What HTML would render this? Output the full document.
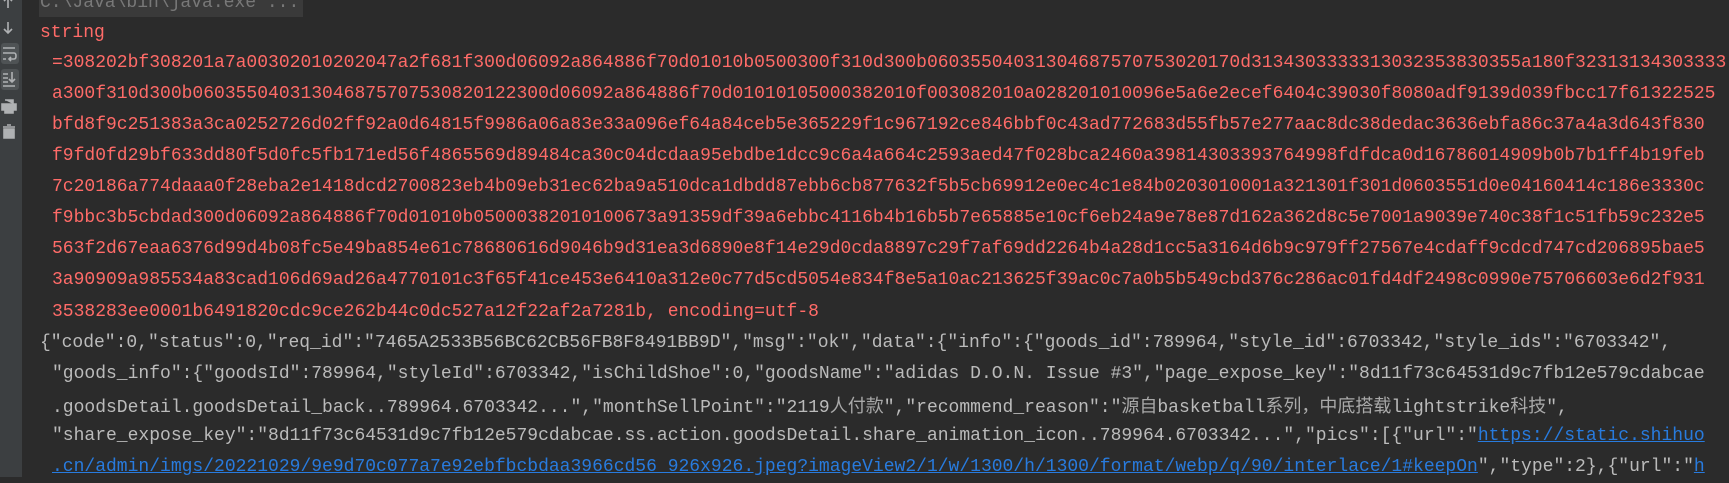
<!DOCTYPE html>
<html><head><meta charset="utf-8">
<style>
html,body{margin:0;padding:0;}
body{width:1729px;height:477px;overflow:hidden;background:#2b2b2b;position:relative;font-family:"Liberation Mono","Noto Sans CJK SC",monospace;font-size:18px;}
.gut{position:absolute;left:0;top:0;width:22px;height:477px;background:#3c3f41;}
.hl{position:absolute;left:1px;width:18px;height:21px;background:#4f5355;border-radius:3px;}
.ln{position:absolute;white-space:pre;line-height:31px;height:31px;}
.r{color:#ff6b68;left:52px;}
.g{color:#bbbbbb;left:52px;}
.java{position:absolute;left:39px;top:0;width:264px;height:17px;background:#3a3a3a;}
a{color:#287bde;text-decoration:underline;}
.cjk{font-family:"Noto Sans CJK SC",sans-serif;color:#a9a9a9;}
</style></head><body>
<div class="gut">
<div class="hl" style="top:43px"></div>
<div class="hl" style="top:69px"></div>
<svg width="22" height="150" style="position:absolute;left:0;top:0" fill="none" stroke="#afb1b3" stroke-width="1.6">
<path d="M8 -2V8M4 1L8 -3L12 1"/>
<path d="M8 22V33M4 29L8 33L12 29"/>
<path d="M3 48H15M3 53H14Q16 53 16 56Q16 59 14 59H9M11 57L9 59L11 61M3 59H6"/>
<path d="M3 74H8M3 78H8M3 82H8M3 86H15M12 72V82M9 79L12 82L15 79"/>
<path d="M5 100H13V104M2 104H16V110H2Z M5 109H13V113H5Z" fill="#afb1b3"/>
<path d="M3 127H15M7 125H11M4 129H14V138H4Z" fill="#afb1b3"/>
</svg>
</div>
<div class="java"></div>
<div class="ln" style="left:40px;top:-12px;color:#787878">C:\Java\bin\java.exe ...</div>
<div class="ln" style="left:40px;top:18px;color:#ff6b68">string</div>
<div class="ln r" style="top:48px">=308202bf308201a7a00302010202047a2f681f300d06092a864886f70d01010b0500300f310d300b06035504031304687570753020170d3134303333313032353830355a180f32313134303333</div>
<div class="ln r" style="top:79px">a300f310d300b060355040313046875707530820122300d06092a864886f70d01010105000382010f003082010a028201010096e5a6e2ecef6404c39030f8080adf9139d039fbcc17f61322525</div>
<div class="ln r" style="top:110px">bfd8f9c251383a3ca0252726d02ff92a0d64815f9986a06a83e33a096ef64a84ceb5e365229f1c967192ce846bbf0c43ad772683d55fb57e277aac8dc38dedac3636ebfa86c37a4a3d643f830</div>
<div class="ln r" style="top:141px">f9fd0fd29bf633dd80f5d0fc5fb171ed56f4865569d89484ca30c04dcdaa95ebdbe1dcc9c6a4a664c2593aed47f028bca2460a39814303393764998fdfdca0d16786014909b0b7b1ff4b19feb</div>
<div class="ln r" style="top:172px">7c20186a774daaa0f28eba2e1418dcd2700823eb4b09eb31ec62ba9a510dca1dbdd87ebb6cb877632f5b5cb69912e0ec4c1e84b0203010001a321301f301d0603551d0e04160414c186e3330c</div>
<div class="ln r" style="top:203px">f9bbc3b5cbdad300d06092a864886f70d01010b05000382010100673a91359df39a6ebbc4116b4b16b5b7e65885e10cf6eb24a9e78e87d162a362d8c5e7001a9039e740c38f1c51fb59c232e5</div>
<div class="ln r" style="top:234px">563f2d67eaa6376d99d4b08fc5e49ba854e61c78680616d9046b9d31ea3d6890e8f14e29d0cda8897c29f7af69dd2264b4a28d1cc5a3164d6b9c979ff27567e4cdaff9cdcd747cd206895bae5</div>
<div class="ln r" style="top:265px">3a90909a985534a83cad106d69ad26a4770101c3f65f41ce453e6410a312e0c77d5cd5054e834f8e5a10ac213625f39ac0c7a0b5b549cbd376c286ac01fd4df2498c0990e75706603e6d2f931</div>
<div class="ln r" style="top:297px">3538283ee0001b6491820cdc9ce262b44c0dc527a12f22af2a7281b, encoding=utf-8</div>
<div class="ln g" style="top:328px;left:40px">{"code":0,"status":0,"req_id":"7465A2533B56BC62CB56FB8F8491BB9D","msg":"ok","data":{"info":{"goods_id":789964,"style_id":6703342,"style_ids":"6703342",</div>
<div class="ln g" style="top:359px">"goods_info":{"goodsId":789964,"styleId":6703342,"isChildShoe":0,"goodsName":"adidas D.O.N. Issue #3","page_expose_key":"8d11f73c64531d9c7fb12e579cdabcae</div>
<div class="ln g" style="top:390px">.goodsDetail.goodsDetail_back..789964.6703342...","monthSellPoint":"2119<span class="cjk">人付款</span>","recommend_reason":"<span class="cjk">源自</span>basketball<span class="cjk">系列，中底搭载</span>lightstrike<span class="cjk">科技</span>",</div>
<div class="ln g" style="top:421px">"share_expose_key":"8d11f73c64531d9c7fb12e579cdabcae.ss.action.goodsDetail.share_animation_icon..789964.6703342...","pics":[{"url":"<a>https://static.shihuo</a></div>
<div class="ln g" style="top:452px"><a>.cn/admin/imgs/20221029/9e9d70c077a7e92ebfbcbdaa3966cd56_926x926.jpeg?imageView2/1/w/1300/h/1300/format/webp/q/90/interlace/1#keepOn</a>","type":2},{"url":"<a>h</a></div>
</body></html>
